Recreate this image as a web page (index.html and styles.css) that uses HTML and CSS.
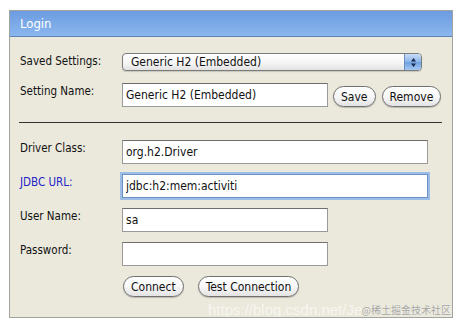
FILE: index.html
```html
<!DOCTYPE html>
<html lang="en">
<head>
  <meta charset="UTF-8">
  <title>Login</title>
  <link rel="stylesheet" href="styles.css">
</head>
<body>
  <div class="login">
    <div class="login-title">Login</div>
    <div class="login-body">
      <div class="row">
        <label>Saved Settings:</label>
        <div class="select">
          <span class="select-text">Generic H2 (Embedded)</span>
          <span class="select-arrows">
            <svg width="7" height="11" viewBox="0 0 7 11"><path d="M3.5 1 L6 4.5 L1 4.5 Z M3.5 10 L6 6.5 L1 6.5 Z" fill="#1b2a4a"/></svg>
          </span>
        </div>
      </div>
      <div class="row">
        <label>Setting Name:</label>
        <div class="field-group">
          <input class="input input-short" value="Generic H2 (Embedded)">
          <button class="btn btn-save">Save</button>
          <button class="btn">Remove</button>
        </div>
      </div>
      <hr class="divider">
      <div class="row">
        <label>Driver Class:</label>
        <input class="input input-long" value="org.h2.Driver">
      </div>
      <div class="row">
        <label class="label-link">JDBC URL:</label>
        <input class="input input-long input-focus" value="jdbc:h2:mem:activiti">
      </div>
      <div class="row">
        <label>User Name:</label>
        <input class="input input-short" value="sa">
      </div>
      <div class="row">
        <label>Password:</label>
        <input class="input input-short" type="password" value="">
      </div>
      <div class="actions">
        <button class="btn">Connect</button>
        <button class="btn">Test Connection</button>
      </div>
    </div>
    <div class="watermark">https://blog.csdn.net/Je</div>
    <div class="watermark-cn">@稀土掘金技术社区</div>
  </div>
</body>
</html>
```

FILE: styles.css
```css
body {
    margin: 0;
    background: #ffffff;
    font-family: "DejaVu Sans Condensed", "DejaVu Sans", sans-serif;
    font-size: 12px;
    color: #111;
}

.login {
    position: relative;
    margin: 10px 0 0 9px;
    width: 442px;
    border: 1px solid #a3a3a0;
    background: #ebe9dc;
    overflow: hidden;
}

.login-title {
    height: 25px;
    line-height: 25px;
    padding-left: 10px;
    font-size: 13px;
    color: #ffffff;
    background: linear-gradient(#6c9ce0, #8bb7ee);
    border-bottom: 1px solid #5f82b4;
}

.login-body {
    padding: 16px 10px 20px 10px;
}

.row {
    display: grid;
    grid-template-columns: 102px auto;
    align-items: start;
    margin-bottom: 10px;
}

.row:first-child {
    margin-bottom: 12px;
}

.row label {
    line-height: 16px;
    font-size: 11.5px;
}

.label-link {
    color: #2323c8;
}

.select {
    width: 298px;
    height: 16px;
    display: flex;
    align-items: center;
    border: 1px solid #7c7c7c;
    border-radius: 4px;
    background: linear-gradient(#ffffff, #f4f4f4 60%, #e2e2e2);
    box-shadow: 0 1px 1px rgba(0, 0, 0, 0.15);
}

.select-text {
    flex: 1;
    padding-left: 8px;
    line-height: 16px;
}

.select-arrows {
    width: 16px;
    height: 16px;
    display: flex;
    align-items: center;
    justify-content: center;
    border-left: 1px solid #6d8fc0;
    border-radius: 0 3px 3px 0;
    background: linear-gradient(#c9ddf6, #8ab5ea 50%, #6c9fe2 51%, #a6c8f2);
}

.field-group {
    display: flex;
    align-items: flex-end;
}

.input {
    box-sizing: border-box;
    height: 24px;
    padding: 0 3px;
    margin: 0;
    border: 1px solid #9a9a9a;
    border-top-color: #6e6e6e;
    background: #ffffff;
    font-family: inherit;
    font-size: 12px;
    color: #111;
    outline: none;
}

.input-short {
    width: 206px;
}

.input-long {
    width: 306px;
}

.input-focus {
    border: 1px solid #6b93c6;
    box-shadow: 0 0 0 2px #9dbde6;
}

.btn {
    box-sizing: border-box;
    height: 21px;
    padding: 0 7px;
    margin: 0 0 0 6px;
    border: 1px solid #6f6f6f;
    border-radius: 11px;
    background: linear-gradient(#ffffff, #f7f7f7 50%, #e3e3e3);
    box-shadow: 0 1px 1px rgba(0, 0, 0, 0.2);
    font-family: inherit;
    font-size: 12px;
    color: #111;
}

.btn-save {
    margin-left: 5px;
}

.divider {
    margin: 15px 0 17px -1px;
    width: 423px;
    border: none;
    border-top: 1px solid #333;
}

.actions {
    display: flex;
    gap: 14px;
    padding-left: 103px;
}

.actions .btn {
    margin: 0;
}

.watermark {
    position: absolute;
    left: 198px;
    top: 290px;
    font-family: "Liberation Sans", sans-serif;
    font-size: 15px;
    line-height: 17px;
    color: rgba(255, 255, 255, 0.6);
    white-space: nowrap;
}

.watermark-cn {
    position: absolute;
    right: 1px;
    bottom: 1px;
    font-family: "Noto Sans CJK SC", sans-serif;
    font-size: 10px;
    line-height: 12px;
    color: #a4a4a0;
    text-shadow: 0 0 1px #ffffff;
    white-space: nowrap;
}
```
